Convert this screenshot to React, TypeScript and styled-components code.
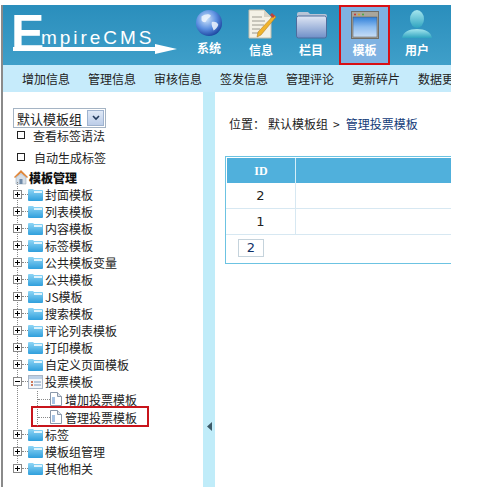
import React from "react";
import styled, { createGlobalStyle } from "styled-components";

const Global = createGlobalStyle`
  html, body { margin: 0; padding: 0; background: #fff; }
  body { font-family: "Noto Sans CJK SC", "Liberation Sans", sans-serif; font-size: 12px; color: #222; }
`;

const Frame = styled.div`
  width: 448px;
  height: 482px;
  margin: 5px 0 0 1px;
  border-left: 2px solid #8a8a8a;
  display: flex;
  flex-direction: column;
  overflow: hidden;
`;
const Header = styled.header`
  height: 60px;
  flex: none;
  display: flex;
  background: linear-gradient(#2a8ebc, #3f9fc9);
`;
const Logo = styled.div`
  width: 185px;
  flex: none;
  position: relative;
  color: #fff;
  font-family: "Liberation Sans", sans-serif;
`;
const LogoE = styled.span`
  position: absolute;
  left: 8px;
  top: -1px;
  font-size: 52px;
  line-height: 58px;
  font-weight: 700;
  transform: scaleX(0.96);
  transform-origin: left;
`;
const LogoRest = styled.span`
  position: absolute;
  left: 38px;
  top: 23px;
  font-size: 19px;
  line-height: 20px;
  letter-spacing: 2.95px;
  white-space: nowrap;
`;
const LogoArrow = styled.svg`
  position: absolute;
  left: 10px;
  top: 38px;
`;
const NavItem = styled.div<{ $active?: boolean; $w: number; $ml?: number }>`
  width: ${(p) => p.$w}px;
  margin-left: ${(p) => p.$ml ?? 0}px;
  flex: none;
  box-sizing: border-box;
  display: flex;
  flex-direction: column;
  align-items: center;
  padding-top: 4px;
  color: #fff;
  font-size: 12px;
  font-weight: 700;
  line-height: 14px;
  ${(p) => (p.$active ? "background:#7fb2e2;border:2px solid #d80f14;padding-top:4px;height:60px;" : "")}
  svg { display: block; margin-bottom: 4px; }
`;
const SubNav = styled.nav`
  height: 27px;
  flex: none;
  display: flex;
  gap: 18px;
  padding: 0 0 0 19px;
  align-items: center;
  background: #c6ebfb;
  white-space: nowrap;
  color: #222;
  span { flex: none; }
`;
const Body = styled.div`
  flex: 1;
  display: flex;
  min-height: 0;
`;
const Sidebar = styled.aside`
  width: 200px;
  flex: none;
  background: #fff;
  padding: 16px 0 0 10px;
  box-sizing: border-box;
`;
const SelectBox = styled.div`
  width: 93px;
  height: 20px;
  box-sizing: border-box;
  border: 1px solid #a5b4c4;
  display: flex;
  align-items: center;
  justify-content: space-between;
  padding-left: 3px;
  font-size: 13px;
  color: #222;
`;
const SelectBtn = styled.span`
  width: 17px;
  height: 16px;
  margin-right: 1px;
  background: linear-gradient(#dfe9f7, #bccde8);
  border: 1px solid #9fb3cf;
  box-sizing: border-box;
  display: flex;
  align-items: center;
  justify-content: center;
`;
const CheckRow = styled.label<{ $gap: number; $mt: number }>`
  display: flex;
  align-items: center;
  height: 18px;
  margin-top: ${(p) => p.$mt}px;
  padding-left: 4px;
  gap: ${(p) => p.$gap}px;
`;
const CheckBoxMark = styled.span`
  width: 6px;
  height: 6px;
  border: 1px solid #222;
  flex: none;
`;
const RootRow = styled.div`
  display: flex;
  align-items: center;
  height: 18px;
  margin-top: 2px;
  font-weight: 900;
  color: #111;
`;
const Tree = styled.div`
  position: relative;
`;
const Row = styled.div<{ $h?: number }>`
  display: flex;
  align-items: center;
  height: ${(p) => p.$h ?? 17}px;
  position: relative;
  white-space: nowrap;
`;
const VLine = styled.span`
  position: absolute;
  left: 4px;
  top: -4px;
  bottom: 8px;
  border-left: 1px dotted #888;
`;
const Expander = styled.span`
  width: 9px;
  height: 9px;
  box-sizing: border-box;
  border: 1px solid #888;
  background: #fff;
  flex: none;
  position: relative;
  &::before {
    content: "";
    position: absolute;
    left: 1px;
    top: 3px;
    width: 5px;
    height: 1px;
    background: #000;
  }
`;
const Plus = styled(Expander)`
  &::after {
    content: "";
    position: absolute;
    left: 3px;
    top: 1px;
    width: 1px;
    height: 5px;
    background: #000;
  }
`;
const HDots = styled.span`
  width: 6px;
  border-top: 1px dotted #888;
  flex: none;
`;
const Label = styled.span<{ $ml?: number }>`
  margin-left: ${(p) => p.$ml ?? 2}px;
  font-size: 12px;
  color: #222;
`;
const Connector = styled.span`
  width: 13px;
  height: 17px;
  margin-left: 24px;
  flex: none;
  position: relative;
  border-left: 1px dotted #888;
  box-sizing: border-box;
  &::after {
    content: "";
    position: absolute;
    left: 0;
    top: 8px;
    width: 12px;
    border-top: 1px dotted #888;
  }
`;
const Highlight = styled.div`
  position: absolute;
  left: 18px;
  top: -2px;
  width: 118px;
  height: 21px;
  box-sizing: border-box;
  border: 2px solid #c8141b;
`;
const Splitter = styled.div`
  width: 12px;
  flex: none;
  background: #c0ecf9;
  display: flex;
  align-items: center;
  justify-content: center;
  padding-top: 274px;
  box-sizing: border-box;
`;
const Content = styled.main`
  flex: 1;
  min-width: 0;
  padding: 0 0 0 10px;
  overflow: hidden;
  background: #fff;
`;
const Crumb = styled.div`
  height: 18px;
  margin-top: 23px;
  margin-left: 4px;
  line-height: 18px;
  color: #222;
  white-space: nowrap;
  display: flex;
`;
const CrumbPart = styled.span<{ $ml?: number }>`
  margin-left: ${(p) => p.$ml ?? 0}px;
`;
const CrumbLink = styled.a`
  margin-left: 6px;
  color: #123a78;
  text-decoration: none;
`;
const TableBox = styled.div`
  margin-top: 23px;
  width: 300px;
  border: 1px solid #6cc3e2;
  box-sizing: border-box;
`;
const HeadRow = styled.div`
  height: 26px;
  display: flex;
  background: #50b0dc;
  border: 1px solid #fff;
  border-width: 1px 0 0 1px;
  box-sizing: border-box;
`;
const HeadId = styled.div`
  width: 68px;
  border-right: 1px solid #d5eef8;
  text-align: center;
  font: 700 12px/26px "Liberation Serif", serif;
  color: #fff;
`;
const DataRow = styled.div`
  height: 26px;
  display: flex;
  border-bottom: 1px solid #d7e8f2;
  box-sizing: border-box;
`;
const DataId = styled.div`
  width: 69px;
  border-right: 1px solid #d7e8f2;
  text-align: center;
  font: 13px/25px "DejaVu Sans", sans-serif;
  color: #222;
`;
const PageRow = styled.div`
  height: 28px;
  display: flex;
  align-items: center;
  padding-left: 12px;
`;
const PageBtn = styled.span`
  width: 26px;
  height: 18px;
  box-sizing: border-box;
  border: 1px solid #c5d3dc;
  text-align: center;
  font: 13px/16px "DejaVu Sans", sans-serif;
  color: #0f2f66;
  margin-top: -2px;
`;

const Globe = () => (
  <svg width="28" height="28" viewBox="0 0 30 30">
    <defs>
      <radialGradient id="gb" cx="0.4" cy="0.35" r="0.7">
        <stop offset="0" stopColor="#cfe4fb" />
        <stop offset="0.55" stopColor="#5b8fe0" />
        <stop offset="1" stopColor="#173f9a" />
      </radialGradient>
    </defs>
    <circle cx="15" cy="15" r="14" fill="url(#gb)" />
    <path d="M7 8c4-3 8-3 10-1-1 3-4 3-5 6-1 2-4 1-5-1zM18 14c3-1 6 0 7 3-1 3-3 5-5 6-1-3-3-6-2-9z" fill="#eef5fd" opacity=".85" />
  </svg>
);
const Doc = () => (
  <svg width="30" height="30" viewBox="0 0 30 30">
    <path d="M3 1h15l7 7v21H3z" fill="#f4f1e6" stroke="#c4bfae" />
    <path d="M18 1v7h7z" fill="#d8d4c6" />
    <path d="M6 8h10M6 12h13M6 16h12M6 20h8M6 24h7" stroke="#9c9a90" />
    <path d="M28 6l2 2-15 18-4 2 1-5z" fill="#f0b42c" stroke="#a9711a" strokeWidth=".5" />
    <path d="M26 4l3 3-2 2-3-3z" fill="#c0413b" />
  </svg>
);
const BigFolder = () => (
  <svg width="31" height="30" viewBox="0 0 31 30">
    <defs>
      <linearGradient id="fd" x1="0" y1="0" x2="0" y2="1">
        <stop offset="0" stopColor="#dfe6f4" />
        <stop offset="1" stopColor="#6f8fc8" />
      </linearGradient>
    </defs>
    <path d="M1 5q0-2 2-2h9l2 2h15q2 0 2 2v2H1z" fill="#b8c4d6" />
    <rect x="0.5" y="7" width="30" height="22" rx="2" fill="url(#fd)" stroke="#4e6c9c" />
  </svg>
);
const WindowIcon = () => (
  <svg width="28" height="28" viewBox="0 0 28 28">
    <defs>
      <linearGradient id="wn" x1="0" y1="0" x2="0" y2="1">
        <stop offset="0" stopColor="#2f7fd8" />
        <stop offset="0.5" stopColor="#8cbcf0" />
        <stop offset="1" stopColor="#c8def6" />
      </linearGradient>
    </defs>
    <rect x="0.5" y="0.5" width="27" height="27" fill="#a9a69c" stroke="#706e68" />
    <rect x="2" y="6" width="24" height="20" fill="url(#wn)" stroke="#555" strokeWidth=".5" />
    <circle cx="4" cy="3.5" r="1" fill="#c33" />
    <circle cx="8" cy="3.5" r="1" fill="#d8a520" />
    <circle cx="12" cy="3.5" r="1" fill="#4a4" />
  </svg>
);
const User = () => (
  <svg width="30" height="30" viewBox="0 0 30 30">
    <defs>
      <linearGradient id="us" x1="0" y1="0" x2="0" y2="1">
        <stop offset="0" stopColor="#a5e6ee" />
        <stop offset="1" stopColor="#2fa4c0" />
      </linearGradient>
    </defs>
    <ellipse cx="15" cy="10" rx="7" ry="9" fill="url(#us)" />
    <path d="M0 29c1-6 7-9 15-9s14 3 15 9z" fill="url(#us)" />
  </svg>
);
const Folder = () => (
  <svg width="15" height="13" viewBox="0 0 15 13" style={{ flex: "none" }}>
    <defs>
      <linearGradient id="tf" x1="0" y1="0" x2="0" y2="1">
        <stop offset="0" stopColor="#8fd6f6" />
        <stop offset="1" stopColor="#2f9fdc" />
      </linearGradient>
    </defs>
    <path d="M0 2q0-1 1-1h4l1 1h8q1 0 1 1v9q0 1-1 1H1q-1 0-1-1z" fill="url(#tf)" />
    <path d="M6 3h8v2H6z" fill="#dff3fc" />
  </svg>
);
const ListFolder = () => (
  <svg width="15" height="14" viewBox="0 0 15 14" style={{ flex: "none" }}>
    <rect x=".5" y=".5" width="14" height="13" fill="#f3f6fa" stroke="#a9b6c6" />
    <path d="M1 1h13v3H1z" fill="#bcd0e6" />
    <path d="M3 7h2M3 10h2" stroke="#c0502a" strokeWidth="1.4" />
    <path d="M6 7h7M6 10h7" stroke="#7a9abc" />
  </svg>
);
const Page = () => (
  <svg width="12" height="14" viewBox="0 0 12 14" style={{ flex: "none" }}>
    <path d="M.5.5h7l4 4v9H.5z" fill="#fff" stroke="#8a98aa" />
    <path d="M7.5.5v4h4" fill="#dfe6ee" stroke="#8a98aa" />
    <rect x="2" y="5" width="3" height="7" fill="#a8c4e4" />
  </svg>
);
const Home = () => (
  <svg width="16" height="16" viewBox="0 0 16 16" style={{ flex: "none" }}>
    <path d="M8 1L1 8l1 1 6-5 6 5 1-1z" fill="#e0873a" />
    <path d="M3 8.5L8 4.5l5 4V15H3z" fill="#d5dee8" stroke="#8fa0b2" strokeWidth=".5" />
    <rect x="6.5" y="10" width="3" height="5" fill="#6f8aa8" />
  </svg>
);
const Chevron = () => (
  <svg width="8" height="6" viewBox="0 0 8 6">
    <path d="M1 1l3 3 3-3" fill="none" stroke="#223a5c" strokeWidth="1.6" />
  </svg>
);

const before = ["封面模板", "列表模板", "内容模板", "标签模板", "公共模板变量", "公共模板", "JS模板", "搜索模板", "评论列表模板", "打印模板", "自定义页面模板"];
const after = ["标签", "模板组管理", "其他相关"];
const sub = ["增加信息", "管理信息", "审核信息", "签发信息", "管理评论", "更新碎片", "数据更新"];

const FolderRow = ({ name }: { name: string }) => (
  <Row>
    <Plus />
    <HDots />
    <Folder />
    <Label>{name}</Label>
  </Row>
);

export default function App() {
  return (
    <>
      <Global />
      <Frame>
        <Header>
          <Logo>
            <LogoE>E</LogoE>
            <LogoRest>mpireCMS</LogoRest>
            <LogoArrow width="165" height="12" viewBox="0 0 165 12">
              <path d="M0 4h142V1l22 5-22 5V8H0z" fill="#fff" />
            </LogoArrow>
          </Logo>
          <NavItem $w={42}><Globe />系统</NavItem>
          <NavItem $w={52} $ml={5}><Doc />信息</NavItem>
          <NavItem $w={48}><BigFolder />栏目</NavItem>
          <NavItem $w={51} $ml={4} $active><WindowIcon />模板</NavItem>
          <NavItem $w={54}><User />用户</NavItem>
        </Header>
        <SubNav>
          {sub.map((s) => <span key={s}>{s}</span>)}
        </SubNav>
        <Body>
          <Sidebar>
            <SelectBox>默认模板组<SelectBtn><Chevron /></SelectBtn></SelectBox>
            <CheckRow $gap={8} $mt={-2}><CheckBoxMark />查看标签语法</CheckRow>
            <CheckRow $gap={9} $mt={4}><CheckBoxMark />自动生成标签</CheckRow>
            <RootRow><Home />模板管理</RootRow>
            <Tree>
              <VLine />
              {before.map((n) => <FolderRow key={n} name={n} />)}
              <Row>
                <Expander />
                <HDots />
                <ListFolder />
                <Label>投票模板</Label>
              </Row>
              <Row $h={18}>
                <Connector />
                <Page />
                <Label $ml={3}>增加投票模板</Label>
              </Row>
              <Row $h={18}>
                <Highlight />
                <Connector />
                <Page />
                <Label $ml={3}>管理投票模板</Label>
              </Row>
              {after.map((n) => <FolderRow key={n} name={n} />)}
            </Tree>
          </Sidebar>
          <Splitter>
            <svg width="5" height="9" viewBox="0 0 5 9"><path d="M5 0v9L0 4.5z" fill="#3d5a68" /></svg>
          </Splitter>
          <Content>
            <Crumb>
              <CrumbPart>位置：</CrumbPart>
              <CrumbPart $ml={3}>默认模板组</CrumbPart>
              <CrumbPart $ml={5}>&gt;</CrumbPart>
              <CrumbLink>管理投票模板</CrumbLink>
            </Crumb>
            <TableBox>
              <HeadRow><HeadId>ID</HeadId></HeadRow>
              <DataRow><DataId>2</DataId></DataRow>
              <DataRow><DataId>1</DataId></DataRow>
              <PageRow><PageBtn>2</PageBtn></PageRow>
            </TableBox>
          </Content>
        </Body>
      </Frame>
    </>
  );
}
